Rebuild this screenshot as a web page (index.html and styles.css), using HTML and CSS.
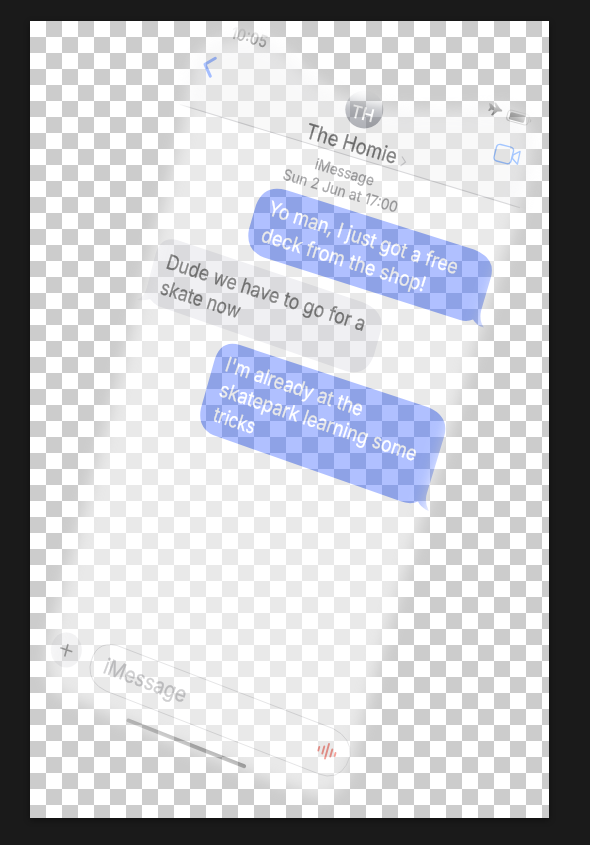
FILE: index.html
```html
<!DOCTYPE html>
<html lang="en">
<head>
<meta charset="utf-8">
<title>Messages</title>
<link rel="stylesheet" href="styles.css">
</head>
<body>
<main class="canvas">
<svg class="phone" viewBox="30 21 519 797" width="519" height="797" role="img" aria-label="Conversation with The Homie">
  <defs>
    <filter id="soften" x="-10%" y="-10%" width="120%" height="120%"><feGaussianBlur stdDeviation="8"/></filter>
    <mask id="fade" maskUnits="userSpaceOnUse" x="30" y="21" width="519" height="797">
      <path class="mask-shape" filter="url(#soften)" d="M193 62 Q210 36 245 37 Q277 38 300 66 Q328 95 372 104 Q430 115 500 106 Q538 112 530 160 Q523 205 503 260 L397 600 L357 740 Q347 798 318 798 L190 750 L60 694 Q42 680 49 640 L134 320 L182 130 Z"/>
    </mask>
    <linearGradient id="avatar" x1="0" y1="0" x2="0" y2="1"><stop offset="0" stop-color="#c3c5cb"/><stop offset=".45" stop-color="#8b8e97"/><stop offset="1" stop-color="#747781"/></linearGradient>
    <linearGradient id="homebar" gradientUnits="userSpaceOnUse" x1="128" y1="720" x2="244" y2="766"><stop offset="0" stop-color="#8a8a8a"/><stop offset="1" stop-color="#555"/></linearGradient>
    <pattern id="bubble" patternUnits="userSpaceOnUse" x="30" y="21" width="32" height="32">
      <rect class="blue" width="32" height="32"/>
      <path class="blue-shade" d="M16 0h16v16h-16zM0 16h16v16h-16z"/>
    </pattern>
  </defs>
  <g mask="url(#fade)">
    <rect class="screen" x="30" y="21" width="519" height="797"/>
    <path class="header" d="M30 21H549V216.5L30 59.5Z"/>
    <path class="divider" d="M180 104.500L520 207.700"/>

    <text class="time" transform="translate(230 38) rotate(16)" textLength="37" lengthAdjust="spacingAndGlyphs">10:05</text>
    <path class="back" d="M215.3 58.3L205 64.3L210.3 76.2"/>
    <circle cx="364.3" cy="109.5" r="19" fill="url(#avatar)"/>
    <text class="initials" transform="translate(350 117) rotate(14)" textLength="23" lengthAdjust="spacingAndGlyphs">TH</text>
    <text class="name" transform="translate(304.500 137.500) rotate(16.4)" textLength="94" lengthAdjust="spacingAndGlyphs">The Homie</text>
    <path class="chevron" d="M402 156.5L405.5 162L400.5 166"/>
    <path class="plane" d="M489 103L491.5 104L494 107L496 107.500L494 102.500L496 102.500L500 108.500Q503 110 502 111.500L497.500 111.500L492.500 115.500L491 115L494 110.500L491.500 109.500L489.500 111L488 110.500L490 107.500Z"/>
    <g transform="translate(518 117.500) rotate(15)">
      <rect class="battery-shell" x="-11" y="-5.500" width="22" height="11" rx="3.500"/>
      <rect class="battery-level" x="-8.500" y="-3.500" width="15.500" height="7.500" rx="1.500"/>
      <path class="battery-level" d="M12.500 -2Q15 0 12.500 2Z"/>
    </g>
    <g transform="translate(503.500 154) rotate(14)">
      <rect class="video" x="-8.500" y="-8.500" width="17.500" height="17" rx="3.500"/>
      <path class="video" d="M9.500 -1.500L15.500 -6.500L16 6.500L9.500 2Z"/>
    </g>

    <text class="stamp" transform="translate(314 168.500) rotate(16.600)" textLength="61" lengthAdjust="spacingAndGlyphs">iMessage</text>
    <text class="stamp" transform="translate(282 179) rotate(16.500)" textLength="119" lengthAdjust="spacingAndGlyphs">Sun 2 Jun at 17:00</text>

    <path class="sent" d="M286 190L474 249.500Q496 258 491 277L481 311Q479 321 484 327.500Q477 326 473 319.500Q467 322 460 320L264 257.500Q245 250 249 229L256 205Q264 184 286 190Z"/>
    <text class="message light" transform="translate(267 214.500) rotate(17.600)" textLength="198" lengthAdjust="spacingAndGlyphs">Yo man, I just got a free</text>
    <text class="message light" transform="translate(260 241) rotate(17.300)" textLength="171" lengthAdjust="spacingAndGlyphs">deck from the shop!</text>

    <path class="received" d="M177 240L362 302Q385 311 381 330L374 355Q366 377 346 371L158 306Q153 303 150 299Q144 301 137 300Q145 296 147 287L155 256Q160 236 177 240Z"/>
    <text class="message dark" transform="translate(165 268) rotate(17.700)" textLength="208" lengthAdjust="spacingAndGlyphs">Dude we have to go for a</text>
    <text class="message dark" transform="translate(159 293.500) rotate(17.500)" textLength="83" lengthAdjust="spacingAndGlyphs">skate now</text>

    <path class="sent" d="M240 345L429 407.500Q450 417 444 437L427 493Q424 502 429 511Q421 508 418 501.500Q410 505 400 501L213 435Q197 427 201 408L214 362Q220 339 240 345Z"/>
    <text class="message light" transform="translate(224 370.500) rotate(18.500)" textLength="144" lengthAdjust="spacingAndGlyphs">I'm already at the</text>
    <text class="message light" transform="translate(218 395.500) rotate(18.500)" textLength="207" lengthAdjust="spacingAndGlyphs">skatepark learning some</text>
    <text class="message light" transform="translate(212 420.500) rotate(18.400)" textLength="43" lengthAdjust="spacingAndGlyphs">tricks</text>

    <ellipse class="add" cx="66.300" cy="650" rx="15.500" ry="17.500"/>
    <path class="plus" d="M60.300 647.800L72.300 651.800M68 644L64.700 656.500"/>
    <path class="input" d="M117 645.500L333 728.500Q352 738 350 756Q344 777 327 776L319 774L106 691Q89 683 90 667Q94 640 117 645.500Z"/>
    <text class="placeholder" transform="translate(102 672.500) rotate(20.500)" textLength="87" lengthAdjust="spacingAndGlyphs">iMessage</text>
    <path class="voice" d="M319.300 747L318.300 750.500M324.300 746.500L322.300 753.500M329 744L325 758.500M332.300 749.500L330.300 756.500M335.500 753L334.700 756"/>
    <path class="home" d="M128.500 720.500L244 766.200"/>
  </g>
</svg>
</main>
</body>
</html>
```
FILE: styles.css
```css
* { box-sizing: border-box; }

body {
  margin: 0;
  min-height: 100vh;
  padding: 21px 41px 27px 30px;
  background: #1a1a1a;
  font-family: Inter, "Liberation Sans", sans-serif;
  overflow: hidden;
}

.canvas {
  width: 519px;
  height: 797px;
  background: conic-gradient(#ccc 25%, #fff 0 50%, #ccc 0 75%, #fff 0) 0 0 / 32px 32px;
  box-shadow: 0 2px 6px rgba(0, 0, 0, .4);
}

.phone { display: block; }
.phone g[mask] { opacity: .57; }

.mask-shape, .screen { fill: #fff; }
.header { fill: #f5f5f6; }

.divider, .back, .chevron, .video, .plus, .input, .voice, .home, .battery-shell { fill: none; }
.divider { stroke: #bdbdc0; stroke-width: 1.1; }
.back { stroke: #5f8cff; stroke-width: 3; stroke-linecap: round; stroke-linejoin: round; }
.chevron { stroke: #b5b5b8; stroke-width: 1.2; }
.plane { fill: #333; }
.battery-shell { stroke: #a5a5a5; stroke-width: 1; }
.battery-level { fill: #555; }
.video { stroke: #5f9cff; stroke-width: 1.4; stroke-linejoin: round; }

.time { font-size: 17px; font-weight: 600; fill: #444; }
.initials { font-size: 18px; font-weight: 500; fill: #fff; }
.name { font-size: 21px; fill: #222; stroke: #222; stroke-width: .25; }
.stamp { font-size: 15px; fill: #6a6a6d; stroke: #6a6a6d; stroke-width: .2; }
.message { font-size: 20.500px; stroke-width: .25; }
.light { fill: #fff; stroke: #fff; }
.dark { fill: #2a2a2a; stroke: #2a2a2a; }

.sent { fill: url(#bubble); }
.blue { fill: #7592ff; }
.blue-shade { fill: #6084fb; }
.received { fill: #e5e5ea; }

.add { fill: #e9e9eb; }
.plus { stroke: #666; stroke-width: 1.6; }
.input { stroke: #d2d2d4; stroke-width: 1; }
.placeholder { font-size: 22px; fill: #adadb0; stroke: #adadb0; stroke-width: .25; }
.voice { stroke: #ef5b4f; stroke-width: 1.9; stroke-linecap: round; }
.home { stroke: url(#homebar); stroke-width: 4; stroke-linecap: round; }
```
